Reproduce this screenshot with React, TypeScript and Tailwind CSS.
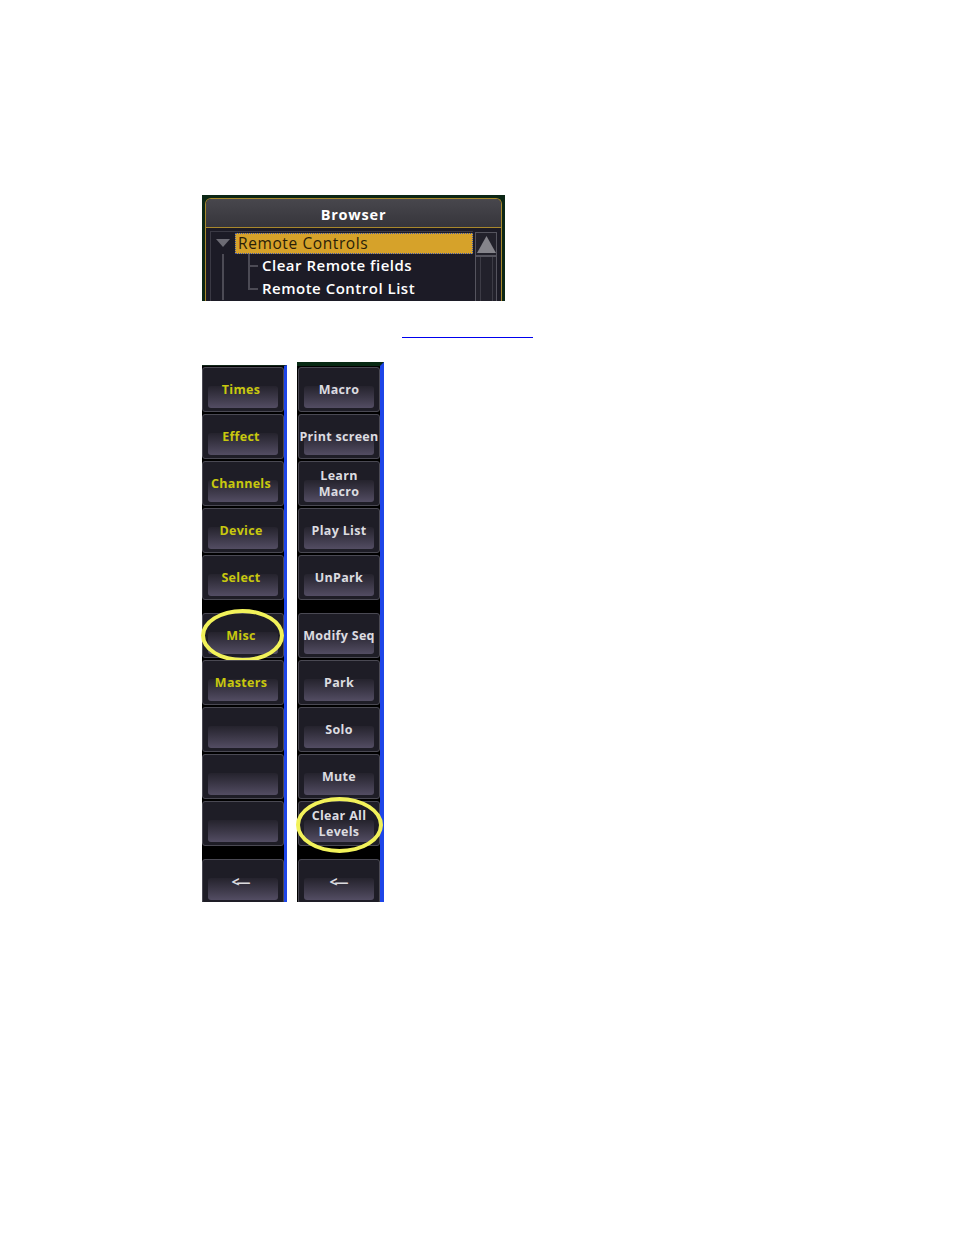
import React from "react";

type BtnProps = { label?: string; lines?: string[]; yellow?: boolean; circle?: "misc" | "clear"; arrow?: boolean };

function Btn({ label, lines, yellow, circle, arrow }: BtnProps) {
  return (
    <div
      className={
        "relative mt-[1px] h-[45px] rounded-[3px] border border-[#4a4953] bg-[#1e1d26] flex items-center justify-center " +
        (yellow || (arrow && label === "l") ? "pr-[4px]" : "")
      }
    >
      <div className="absolute left-[5px] right-[5px] bottom-[3px] h-[22px] rounded-[3px] bg-linear-to-b from-[#25232d] to-[#534d63]" />
      <div
        className={
          "relative flex flex-col items-center leading-[16px] font-bold text-[12.5px] tracking-[0.3px] " +
          (yellow ? "text-[#c8c80e]" : "text-[#dcdce0]")
        }
        style={{ fontFamily: '"Open Sans", "DejaVu Sans", sans-serif' }}
      >
        {arrow ? (
          <span className="text-[14px] tracking-[-3px] pr-[3px]">{"<\u2014"}</span>
        ) : lines ? (
          lines.map((l) => <span key={l}>{l}</span>)
        ) : (
          <span>{label}</span>
        )}
      </div>
      {circle === "misc" && (
        <div className="absolute left-[-2px] right-[-1px] top-[-5px] bottom-[-5px] rounded-[50%] border-[4px] border-[#f2f25a]" />
      )}
      {circle === "clear" && (
        <div className="absolute left-[-3px] right-[-4px] top-[-5px] bottom-[-8px] rounded-[50%] border-[4px] border-[#f2f25a]" />
      )}
    </div>
  );
}

function Cell({ children }: { children?: React.ReactNode }) {
  return <div className="h-[47px]">{children}</div>;
}

export default function App() {
  const left: BtnProps[] = [
    { label: "Times", yellow: true },
    { label: "Effect", yellow: true },
    { label: "Channels", yellow: true },
    { label: "Device", yellow: true },
    { label: "Select", yellow: true },
  ];
  const left2: BtnProps[] = [
    { label: "Misc", yellow: true, circle: "misc" },
    { label: "Masters", yellow: true },
    { label: "" },
    { label: "" },
    { label: "" },
  ];
  const right: BtnProps[] = [
    { label: "Macro" },
    { label: "Print screen" },
    { lines: ["Learn", "Macro"] },
    { label: "Play List" },
    { label: "UnPark" },
  ];
  const right2: BtnProps[] = [
    { label: "Modify Seq" },
    { label: "Park" },
    { label: "Solo" },
    { label: "Mute" },
    { lines: ["Clear All", "Levels"], circle: "clear" },
  ];

  const treeFont = { fontFamily: '"Open Sans", "DejaVu Sans", sans-serif' };

  return (
    <div className="h-[1235px] w-[954px] bg-white pl-[202px] pt-[195px]">
      {/* Browser panel */}
      <div className="w-[303px] h-[106px] bg-[#0b2615] pt-[3px] px-[3px] overflow-hidden">
        <div className="h-[110px] rounded-t-[6px] border border-b-0 border-[#a8882c] bg-[#1c1b26] flex flex-col">
          <div
            className="h-[29px] shrink-0 pt-[3px] rounded-t-[5px] border-b border-[#a8882c] bg-linear-to-b from-[#48474d] to-[#36353b] flex items-center justify-center text-white font-bold text-[14.5px] tracking-[0.8px]"
            style={treeFont}
          >
            Browser
          </div>
          <div className="flex pl-[4px] pt-[3px] pr-[4px]">
            <div className="flex-1 border-l border-t border-[#3a3944] pt-[1px]">
              {/* row 1 */}
              <div className="flex h-[21px]">
                <div className="w-[24px] flex justify-center pt-[6px]">
                  <svg width="14" height="9" viewBox="0 0 14 9">
                    <polygon points="0,0 14,0 7,8" fill="#6c6b74" />
                  </svg>
                </div>
                <div
                  className="flex-1 bg-[#d6a22a] border border-dotted border-[#3a55a8] flex items-center pl-[2px] text-[#2a1e08] text-[15.5px] tracking-[0.6px] leading-none"
                  style={treeFont}
                >
                  Remote Controls
                </div>
              </div>
              {/* row 2 */}
              <div className="flex h-[23px]">
                <svg width="24" height="23" viewBox="0 0 24 23">
                  <rect x="11" y="0" width="2" height="23" fill="#4c4b55" />
                </svg>
                <svg width="27" height="23" viewBox="0 0 27 23">
                  <rect x="13" y="0" width="2" height="23" fill="#4c4b55" />
                  <rect x="13" y="11" width="10" height="2" fill="#4c4b55" />
                </svg>
                <div className="flex items-center text-white font-semibold text-[15px] tracking-[0.5px]" style={treeFont}>
                  Clear Remote fields
                </div>
              </div>
              {/* row 3 */}
              <div className="flex h-[23px]">
                <svg width="24" height="23" viewBox="0 0 24 23">
                  <rect x="11" y="0" width="2" height="23" fill="#4c4b55" />
                </svg>
                <svg width="27" height="23" viewBox="0 0 27 23">
                  <rect x="13" y="0" width="2" height="12" fill="#4c4b55" />
                  <rect x="13" y="11" width="10" height="2" fill="#4c4b55" />
                </svg>
                <div className="flex items-center text-white font-semibold text-[15px] tracking-[0.5px]" style={treeFont}>
                  Remote Control List
                </div>
              </div>
            </div>
            {/* scrollbar */}
            <div className="ml-[2px] mt-[1px] w-[22px] h-[80px] border border-[#55545e] bg-[#22212b] flex flex-col">
              <div className="h-[24px] border-b-2 border-[#55545e] flex items-center justify-center">
                <svg width="19" height="17" viewBox="0 0 19 17">
                  <polygon points="9.5,0 19,17 0,17" fill="#85848b" />
                </svg>
              </div>
              <div className="flex-1 mx-auto w-[13px] border-x border-[#3d3c46]" />
            </div>
          </div>
        </div>
      </div>

      {/* link */}
      <div className="ml-[200px] mt-[36px] w-[131px] h-[1px] bg-[#0000ee]" />

      {/* columns */}
      <div className="mt-[24px] flex items-start gap-[10px]">
        <div className="mt-[3px] w-[85px] h-[537px] bg-black border-t border-t-[#12281a] border-r-[3px] border-r-[#1d45e8] flex flex-col">
          {left.map((b, i) => (
            <Cell key={"l" + i}>
              <Btn {...b} />
            </Cell>
          ))}
          <div className="h-[11px]" />
          {left2.map((b, i) => (
            <Cell key={"l2" + i}>
              <Btn {...b} />
            </Cell>
          ))}
          <div className="h-[11px]" />
          <div className="h-[44px] overflow-hidden">
            <Btn arrow label="l" />
          </div>
        </div>
        <div className="w-[87px] h-[540px] bg-black pl-[1px] border-t-4 border-t-[#082a14] border-r-4 border-r-[#1d45e8] flex flex-col">
          {right.map((b, i) => (
            <Cell key={"r" + i}>
              <Btn {...b} />
            </Cell>
          ))}
          <div className="h-[11px]" />
          {right2.map((b, i) => (
            <Cell key={"r2" + i}>
              <Btn {...b} />
            </Cell>
          ))}
          <div className="h-[11px]" />
          <div className="h-[44px] overflow-hidden">
            <Btn arrow />
          </div>
        </div>
      </div>
    </div>
  );
}
